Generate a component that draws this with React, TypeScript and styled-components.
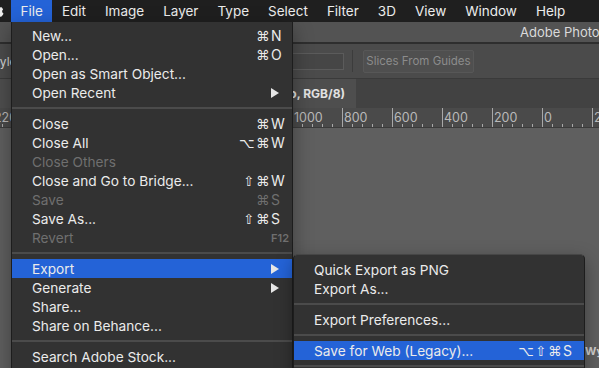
import styled, { createGlobalStyle } from "styled-components";

const GlobalStyle = createGlobalStyle`
  html, body {
    margin: 0;
    padding: 0;
    overflow: hidden;
    background: #5f5f5f;
  }
  body {
    font-family: Inter, "DejaVu Sans", sans-serif;
    -webkit-font-smoothing: antialiased;
  }
`

const Screen = styled.div`
  position: relative;
  width: 599px;
  height: 368px;
  overflow: hidden;
  display: flex;
  flex-direction: column;
  background: #5f5f5f;
`

/* ---------- mac menu bar ---------- */

const MenuBar = styled.div`
  height: 22px;
  flex: none;
  display: flex;
  align-items: stretch;
  background: #1f1f1f;
`

const Apple = styled.svg`
  width: 11px;
  height: 22px;
  flex: none;
`

const MenuTitle = styled.div<{ $active?: boolean }>`
  display: flex;
  align-items: center;
  padding: 0 9.5px;
  font-size: 13.5px;
  color: #ececec;
  background: ${p => (p.$active ? "#2463d7" : "transparent")};
  white-space: nowrap;
`

/* ---------- photoshop window ---------- */

const TitleBar = styled.div`
  height: 20px;
  flex: none;
  display: flex;
  align-items: center;
  padding-left: 520px;
  background: #535353;
  border-bottom: 2px solid #2e2e2e;
  font-size: 13px;
  color: #dadada;
  white-space: nowrap;
  overflow: hidden;
`

const OptionsBar = styled.div`
  height: 34px;
  flex: none;
  display: flex;
  align-items: center;
  background: #4b4b4b;
  border-bottom: 1px solid #3a3a3a;
  overflow: hidden;
`

const OptionsLabel = styled.div`
  width: 290px;
  margin-left: -12px;
  flex: none;
  font-size: 12px;
  color: #d6d6d6;
  white-space: nowrap;
`

const OptionsInput = styled.div`
  width: 52px;
  height: 15px;
  flex: none;
  margin-left: 12px;
  background: #464646;
  border: 1px solid #5b5b5b;
`

const OptionsDivider = styled.div`
  width: 1px;
  height: 22px;
  margin: 0 10px 0 8px;
  background: #3c3c3c;
`

const OptionsButton = styled.div`
  width: 109px;
  height: 21px;
  flex: none;
  display: flex;
  align-items: center;
  justify-content: center;
  background: #4f4f4f;
  border: 1px solid #575757;
  border-radius: 2px;
  font-size: 11.5px;
  color: #8c8c8c;
  white-space: nowrap;
`

const TabBar = styled.div`
  height: 29px;
  flex: none;
  display: flex;
  background: #424242;
`

const DocTab = styled.div`
  width: 356px;
  flex: none;
  display: flex;
  align-items: center;
  justify-content: flex-end;
  padding-right: 11px;
  box-sizing: border-box;
  background: #4e4e4e;
  font-size: 12px;
  font-weight: 700;
  color: #e2e2e2;
  white-space: nowrap;
  overflow: hidden;
`

const Ruler = styled.div`
  height: 19px;
  flex: none;
  display: flex;
  background: #4a4a4a;
  border-bottom: 1px solid #3b3b3b;
  overflow: hidden;
`

const RulerCell = styled.div`
  position: relative;
  width: 50px;
  flex: none;
  box-sizing: border-box;
  border-left: 1px solid #a8a8a8;
  padding: 3px 0 0 1px;
  font-size: 12.5px;
  color: #b9b9b9;
  line-height: 14px;

  &:first-child {
    margin-left: -8px;
  }

  &::after {
    content: "";
    position: absolute;
    left: 9px;
    bottom: 0;
    width: 31px;
    height: 3px;
    background: linear-gradient(to right, #a8a8a8 1px, transparent 1px) 0 0 / 10px 3px repeat-x;
  }
`

const Canvas = styled.div`
  flex: 1;
  display: flex;
  justify-content: flex-end;
  align-items: flex-end;
  background: #5f5f5f;
`

const DocPeek = styled.div`
  width: 14px;
  height: 28px;
  box-sizing: border-box;
  padding-top: 4px;
  background: #5f5f5f;
  font-size: 11px;
  font-weight: 700;
  color: #d0d0d0;
  white-space: nowrap;
  overflow: hidden;
`

/* ---------- drop-down menus ---------- */

const Dropdown = styled.div<{ $left: number; $top: number; $width: number; $round?: boolean }>`
  position: absolute;
  left: ${p => p.$left}px;
  top: ${p => p.$top}px;
  width: ${p => p.$width}px;
  box-sizing: border-box;
  padding-top: ${p => (p.$round ? 5 : 4)}px;
  background: #323232;
  border-left: 1px solid #1d1d1d;
  border-right: 1px solid #1d1d1d;
  border-top: ${p => (p.$round ? "1px solid #464646" : "none")};
  border-radius: ${p => (p.$round ? "5px 5px 0 0" : "0")};
  box-shadow: 0 6px 18px rgba(0, 0, 0, 0.35);
`

const Item = styled.div<{ $active?: boolean; $disabled?: boolean }>`
  height: 19px;
  display: flex;
  align-items: center;
  padding: 0 7px 0 20px;
  font-size: 13.7px;
  color: ${p => (p.$disabled ? "#6f6f6f" : "#ebebeb")};
  background: ${p => (p.$active ? "#2463d7" : "transparent")};
  white-space: nowrap;
`

const Label = styled.span`
  flex: 1;
`

const Shortcut = styled.span`
  display: flex;
  align-items: center;
  font-family: "DejaVu Sans", sans-serif;
  font-size: 13.5px;
`

const Mods = styled.span`
  letter-spacing: 1.5px;
`

const Key = styled.span`
  width: 14px;
  font-family: Inter, "DejaVu Sans", sans-serif;
  font-size: 14px;
`

const FnKey = styled.span`
  margin-right: -4px;
  font-size: 11px;
  font-weight: 600;
`

const Arrow = styled.span`
  width: 0;
  height: 0;
  margin-right: 6px;
  border-left: 8px solid #e6e6e6;
  border-top: 5px solid transparent;
  border-bottom: 5px solid transparent;
`

const Separator = styled.div`
  height: 12px;
  display: flex;
  align-items: center;

  &::before {
    content: "";
    flex: 1;
    height: 2px;
    background: #4b4b4b;
  }
`

type Entry =
  | { sep: true }
  | {
      sep?: false;
      label: string;
      mods?: string;
      keyName?: string;
      fn?: string;
      sub?: boolean;
      disabled?: boolean;
      active?: boolean;
    };

const fileMenu: Entry[] = [
  { label: "New...", mods: "⌘", keyName: "N" },
  { label: "Open...", mods: "⌘", keyName: "O" },
  { label: "Open as Smart Object..." },
  { label: "Open Recent", sub: true },
  { sep: true },
  { label: "Close", mods: "⌘", keyName: "W" },
  { label: "Close All", mods: "⌥⌘", keyName: "W" },
  { label: "Close Others", disabled: true },
  { label: "Close and Go to Bridge...", mods: "⇧⌘", keyName: "W" },
  { label: "Save", mods: "⌘", keyName: "S", disabled: true },
  { label: "Save As...", mods: "⇧⌘", keyName: "S" },
  { label: "Revert", fn: "F12", disabled: true },
  { sep: true },
  { label: "Export", sub: true, active: true },
  { label: "Generate", sub: true },
  { label: "Share..." },
  { label: "Share on Behance..." },
  { sep: true },
  { label: "Search Adobe Stock..." },
  { sep: true },
  { label: "Place Embedded..." },
];

const exportMenu: Entry[] = [
  { label: "Quick Export as PNG" },
  { label: "Export As..." },
  { sep: true },
  { label: "Export Preferences..." },
  { sep: true },
  { label: "Save for Web (Legacy)...", mods: "⌥⇧⌘", keyName: "S", active: true },
  { sep: true },
  { label: "Artboards to Files..." },
];

function MenuList({ entries }: { entries: Entry[] }) {
  return (
    <>
      {entries.map((e, i) =>
        e.sep ? (
          <Separator key={i} />
        ) : (
          <Item key={i} $active={e.active} $disabled={e.disabled}>
            <Label>{e.label}</Label>
            {e.keyName && (
              <Shortcut>
                <Mods>{e.mods}</Mods>
                <Key>{e.keyName}</Key>
              </Shortcut>
            )}
            {e.fn && <FnKey>{e.fn}</FnKey>}
            {e.sub && <Arrow />}
          </Item>
        )
      )}
    </>
  );
}

const titles = ["File", "Edit", "Image", "Layer", "Type", "Select", "Filter", "3D", "View", "Window", "Help"];

const rulerMarks = Array.from({ length: 13 }, (_, i) => (11 - i) * 200);

export default function App() {
  return (
    <>
      <GlobalStyle />
      <Screen>
        <MenuBar>
          <Apple viewBox="0 0 11 22">
            <path
              d="M-2 7.2c-1.1 0-1.6.6-2.4.6-.8 0-1.4-.6-2.4-.6C-8.4 7.2-10 8.5-10 11c0 2.8 2 5.8 3.4 5.8.8 0 1.1-.5 2.1-.5s1.2.5 2.1.5c1.2 0 2.6-2.4 2.9-3.4-1.5-.6-1.9-2.9-.4-3.9C-.6 7.6-1.3 7.2-2 7.2z"
              transform="translate(3 0)"
              fill="#ececec"
            />
          </Apple>
          {titles.map(t => (
            <MenuTitle key={t} $active={t === "File"}>
              {t}
            </MenuTitle>
          ))}
        </MenuBar>

        <TitleBar>Adobe Photoshop CC 2018</TitleBar>

        <OptionsBar>
          <OptionsLabel>Style:</OptionsLabel>
          <OptionsInput />
          <OptionsDivider />
          <OptionsButton>Slices From Guides</OptionsButton>
        </OptionsBar>

        <TabBar>
          <DocTab>Untitled-1 @ 66.7% (Photo, RGB/8)</DocTab>
        </TabBar>

        <Ruler>
          {rulerMarks.map(v => (
            <RulerCell key={v}>{Math.abs(v)}</RulerCell>
          ))}
        </Ruler>

        <Canvas>
          <DocPeek>Wyatt</DocPeek>
        </Canvas>

        <Dropdown $left={11} $top={22} $width={282}>
          <MenuList entries={fileMenu} />
        </Dropdown>

        <Dropdown $left={293} $top={254} $width={292} $round>
          <MenuList entries={exportMenu} />
        </Dropdown>
      </Screen>
    </>
  );
}
